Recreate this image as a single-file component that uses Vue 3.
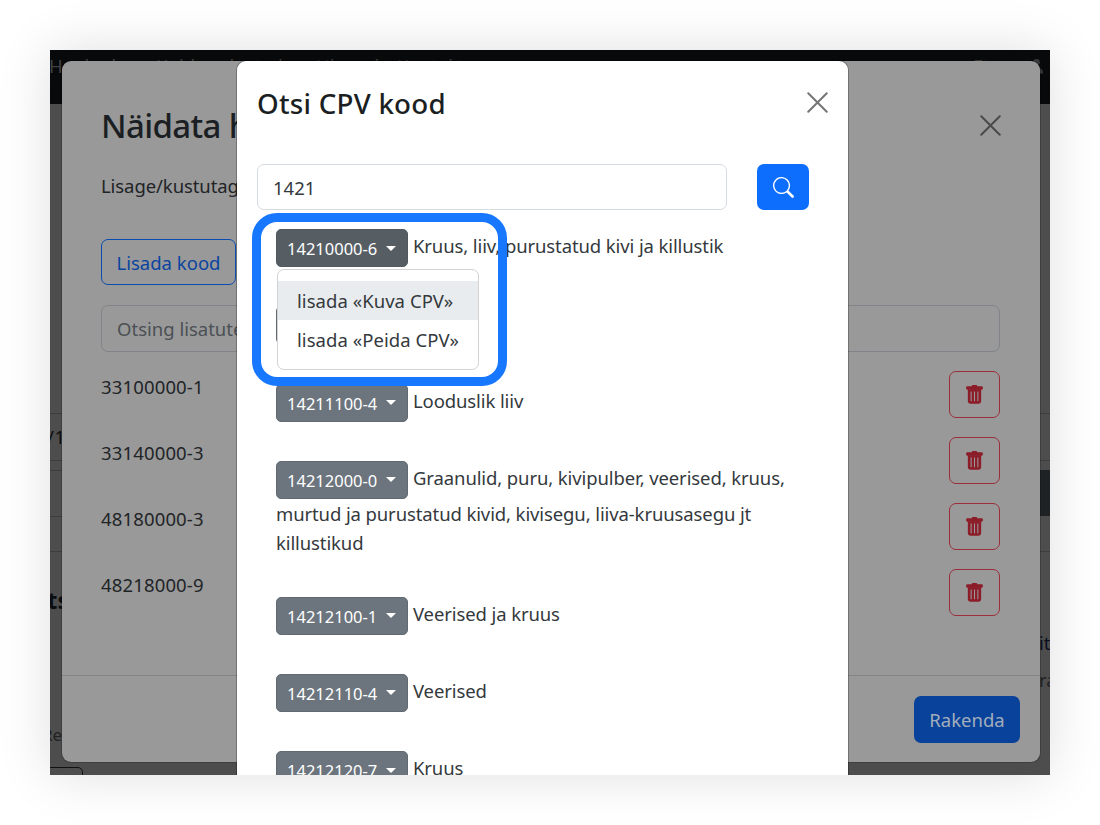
<script setup>
const saved = ['33100000-1', '33140000-3', '48180000-3', '48218000-9']
const results = [
  { code: '14210000-6', lines: ['Kruus, liiv, purustatud kivi ja killustik'], open: true },
  { code: '', lines: [''] },
  { code: '14211100-4', lines: ['Looduslik liiv'] },
  { code: '14212000-0', lines: ['Graanulid, puru, kivipulber, veerised, kruus,', 'murtud ja purustatud kivid, kivisegu, liiva-kruusasegu jt', 'killustikud'] },
  { code: '14212100-1', lines: ['Veerised ja kruus'] },
  { code: '14212110-4', lines: ['Veerised'] },
  { code: '14212120-7', lines: ['Kruus'] },
]
</script>

<template>
  <div class="canvas">
    <div class="stage">
      <div class="page">
        <nav class="nav">
          <span class="n1">Hanked</span><span class="n2">Kuidas alustada</span><span class="n3">Hinnad</span><span class="n4">Kontakt</span>
          <span class="n5">Eta</span>
          <svg class="user" viewBox="0 0 16 16"><circle cx="8" cy="4" r="3.6" /><path d="M1 16c0-9 14-9 14 0z" /></svg>
        </nav>
        <div class="band b1"><span>/1</span></div>
        <div class="band b2"></div>
        <div class="darkbox"></div>
        <b class="bit ts">ts</b>
        <span class="bit re">Re</span>
        <span class="bit it">it</span>
        <span class="bit ra">ra</span>
        <div class="corner"></div>
      </div>

      <section class="outer">
        <header class="outer-head">
          <h1>Näidata hanked</h1>
          <svg class="x" viewBox="0 0 20 20"><path d="M1.2 1.2 18.8 18.8M18.8 1.2 1.2 18.8" /></svg>
        </header>
        <div class="outer-body">
          <p class="intro">Lisage/kustutage</p>
          <button class="add">Lisada kood</button>
          <div class="filter">Otsing lisatutest</div>
          <div v-for="c in saved" :key="c" class="saved">
            <span>{{ c }}</span>
            <button class="del">
              <svg viewBox="0 0 16 18">
                <path d="M5.4 1.2Q5.4.1 6.4.1h3.2q1 0 1 1.1h4.3q1 0 1 1v1.2q0 1-1 1H1.1q-1 0-1-1V2.200q0-1 1-1z" />
                <path fill-rule="evenodd" d="M1.700 4h12.600v11.500q0 2.300-2.300 2.300H4q-2.300 0-2.300-2.300zM4.300 6.200v9.300h1V6.200zM7.500 6.200v9.300h1V6.200zM10.700 6.200v9.300h1V6.200z" />
              </svg>
            </button>
          </div>
        </div>
        <footer class="outer-foot"><button class="apply">Rakenda</button></footer>
      </section>

      <section class="inner">
        <header class="inner-head">
          <h2>Otsi CPV kood</h2>
          <svg class="x" viewBox="0 0 20 20"><path d="M1.2 1.2 18.8 18.8M18.8 1.2 1.2 18.8" /></svg>
        </header>
        <div class="search">
          <div class="field">1421</div>
          <button class="go">
            <svg viewBox="0 0 16 16"><path d="M11.742 10.344a6.500 6.500 0 1 0-1.397 1.398l3.850 3.850a1 1 0 0 0 1.415-1.414l-3.850-3.850zM12 6.500a5.500 5.500 0 1 1-11 0 5.500 5.500 0 0 1 11 0" /></svg>
          </button>
        </div>
        <div class="results">
          <div v-for="(r, i) in results" :key="i" class="item" :class="{ tall: r.lines.length > 1 }">
            <div class="first">
              <button class="code" :class="{ active: r.open }"><span>{{ r.code }}</span><i v-if="r.code"></i></button>
              <span class="desc">{{ r.lines[0] }}</span>
            </div>
            <div v-for="l in r.lines.slice(1)" :key="l" class="more">{{ l }}</div>
            <div v-if="r.open" class="menu">
              <div class="opt hover">lisada «Kuva CPV»</div>
              <div class="opt">lisada «Peida CPV»</div>
            </div>
          </div>
        </div>
        <div class="ring"></div>
      </section>
    </div>
  </div>
</template>

<style>
body { background: #fff; overflow: hidden; }
</style>

<style scoped>
* { box-sizing: border-box; }
.canvas { position: relative; width: 1100px; height: 825px; padding: 50px; background: #fff; font-family: "Noto Sans", "Open Sans", sans-serif; font-size: 18.5px; color: #34393d; overflow: hidden; white-space: nowrap; }
button { font: inherit; padding: 0; margin: 0; }
.stage { position: relative; width: 1000px; height: 725px; overflow: hidden; background: #4d4d4d; }
.canvas::before { content: ""; position: absolute; left: 50px; top: 50px; width: 1000px; height: 725px; box-shadow: 0 0 50px rgba(0, 0, 0, .13); }
.page { position: absolute; inset: 0; color: #0b0d10; }
.nav { position: relative; height: 54px; background: #08090b; color: #414141; }
.nav span { position: absolute; top: 3px; }
.n1 { left: -1px; } .n2 { left: 106px; } .n3 { left: 266px; } .n4 { left: 347px; } .nav .n5 { left: 923px; }
.user { position: absolute; left: 979px; top: 8px; width: 15px; height: 16px; fill: #393939; }
.band { position: absolute; left: 0; right: 0; border-top: 1px solid #3d3d3d; border-bottom: 1px solid #3d3d3d; }
.b1 { top: 363px; height: 48px; }
.b1 span { position: absolute; left: -3px; top: 10px; letter-spacing: .6px; }
.b2 { top: 420px; height: 82px; }
.b2::after { content: ""; position: absolute; top: 45px; width: 20px; border-top: 1px solid #3d3d3d; }
.darkbox { position: absolute; right: 0; top: 420px; width: 20px; height: 46px; background: #1e2225; }
.bit { position: absolute; }
.ts { left: -3px; top: 533px; font-size: 24px; }
.re { left: -8px; top: 673px; color: #222; font-size: 17px; }
.it { left: 989px; top: 580px; color: #0a1020; }
.ra { left: 989px; top: 617px; color: #202224; }
.corner { position: absolute; left: -10px; top: 717px; width: 43px; height: 30px; border: 1px solid #111; border-radius: 5px; }

.outer { position: absolute; left: 12px; top: 11px; width: 978px; height: 701px; border-radius: 9px; background: #999; box-shadow: 0 0 0 1px rgba(0, 0, 0, .18); overflow: hidden; color: #212427; }
.outer-head { height: 105px; padding: 26px 39px 0; display: flex; justify-content: space-between; }
h1, h2 { margin: 0; font-weight: 500; color: #1b1f23; }
h1 { font-size: 33px; line-height: 78px; letter-spacing: -.65px; }
.x { width: 21px; height: 21px; fill: none; stroke: #4a4a4a; stroke-width: 1.900; stroke-linecap: round; flex: none; }
.outer-head .x { margin: 28px 0 0; }
.outer-body { padding: 0 40px 0 39px; height: 509px; }
.intro { margin: 0; height: 73px; line-height: 40px; letter-spacing: -.08px; }
.add { display: block; width: 135px; height: 46px; border: 1px solid #0a4cad; border-radius: 7px; background: none; color: #0a44a0; }
.filter { margin-top: 20px; height: 47px; border: 1px solid #808488; border-radius: 7px; padding-left: 15px; line-height: 46px; color: #4b5055; }
.saved { display: flex; justify-content: space-between; height: 66px; padding-top: 19px; }
.saved span { line-height: 32px; letter-spacing: .15px; }
.del { width: 51px; height: 47px; border: 1px solid #9a2f3b; border-radius: 7px; background: none; display: flex; align-items: center; justify-content: center; }
.del svg { width: 17px; height: 19px; fill: #8b1c28; }
.outer-foot { border-top: 1px solid #838485; height: 87px; padding: 20px 20px 0; display: flex; justify-content: flex-end; }
.apply { width: 106px; height: 47px; border: 0; border-radius: 7px; background: #08429b; color: #a2adbb; }

.inner { position: absolute; left: 187px; top: 11px; width: 611px; height: 730px; border-radius: 9px 9px 0 0; background: #fff; box-shadow: 0 0 0 1px rgba(0, 0, 0, .25); }
.inner-head { height: 103px; padding: 0 20px; display: flex; justify-content: space-between; }
h2 { font-size: 27.700px; line-height: 84px; letter-spacing: .25px; }
.inner-head .x { margin-top: 31px; stroke: #757575; }
.search { display: flex; gap: 30px; padding-left: 20px; height: 65px; }
.field { width: 470px; height: 46px; border: 1px solid #d5dbe1; border-radius: 7px; padding-left: 15px; line-height: 46px; }
.go { width: 52px; height: 46px; border: 0; border-radius: 7px; background: #0d6efd; display: flex; align-items: center; justify-content: center; }
.go svg { width: 21px; height: 21px; fill: #fff; }
.results { padding-left: 39px; letter-spacing: -.11px; }
.item { position: relative; height: 77.300px; }
.item.tall { height: 135.700px; }
.first { display: flex; height: 38px; }
.code { width: 132px; height: 38px; border: 1px solid #626a71; border-radius: 5px; background: #6c757d; color: #fff; font-size: 16.500px; letter-spacing: 0; display: flex; align-items: center; padding: 1px 0 0 10px; }
.code.active { background: #565e64; border-color: #51585e; }
.code i { margin-left: 9px; margin-top: -1px; border: 5.500px solid transparent; border-top-color: #fff; border-bottom: 0; }
.desc { margin-left: 5px; line-height: 34px; }
.more { line-height: 29px; }
.first + .more { margin-top: .5px; }
.menu { position: absolute; left: 1px; top: 40px; width: 202px; height: 101px; z-index: 2; background: #fff; border: 1px solid #d3d3d3; border-radius: 7px; padding-top: 11px; letter-spacing: .05px; }
.opt { height: 39px; line-height: 40px; padding-left: 19px; }
.opt.hover { background: #e9ecef; }
.ring { position: absolute; z-index: 3; left: 14.500px; top: 152px; width: 255.500px; height: 173px; border: 9px solid #1877ff; border-radius: 25px; }
</style>
